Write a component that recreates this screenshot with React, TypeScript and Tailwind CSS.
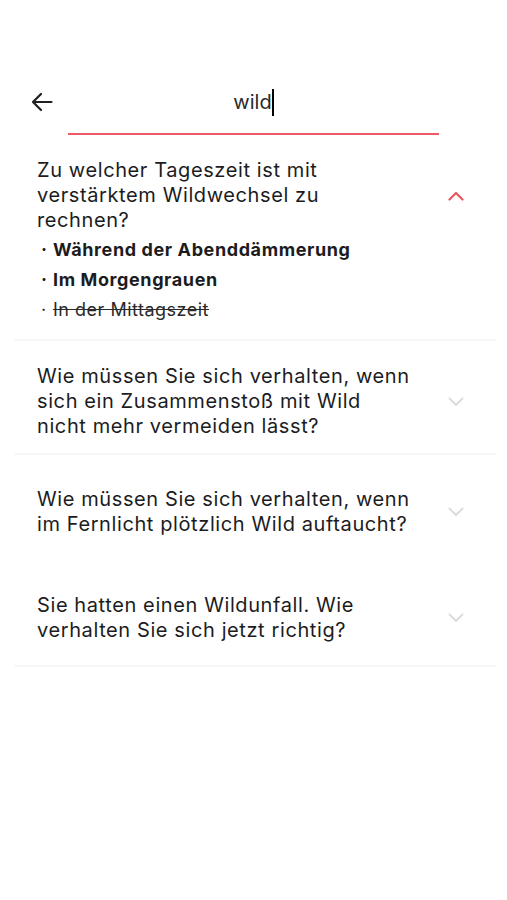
import React from "react";

const font = { fontFamily: "Inter, 'Noto Sans', sans-serif" };

function ChevronUp() {
  return (
    <svg width="16" height="10" viewBox="0 0 16 10" fill="none">
      <path d="M1.5 8.5 L8 2 L14.5 8.5" stroke="#ea5560" strokeWidth="2.2" strokeLinecap="round" strokeLinejoin="round" />
    </svg>
  );
}

function ChevronDown() {
  return (
    <svg width="16" height="10" viewBox="0 0 16 10" fill="none">
      <path d="M1.5 1.5 L8 8 L14.5 1.5" stroke="#dcdcdc" strokeWidth="2" strokeLinecap="round" strokeLinejoin="round" />
    </svg>
  );
}

function Divider() {
  return <div className="ml-[14px] mr-[11px] h-[2px] bg-[#f7f7f7]" />;
}

const q = "text-[20px] leading-[25px] tracking-[0.6px] text-[#1c1c1e]";

export default function App() {
  return (
    <div className="min-h-[900px] w-[507px] bg-white text-[#1c1c1e]" style={font}>
      {/* Header */}
      <div className="flex items-start pt-[78px] pl-[31px]">
        <div className="mt-[13px] w-[22px] h-[22px]">
          <svg width="22" height="22" viewBox="0 0 22 22" fill="none">
            <path d="M20.5 11 H2.5 M10 3 L2 11 L10 19" stroke="#1f1f1f" strokeWidth="2.2" strokeLinecap="round" strokeLinejoin="round" />
          </svg>
        </div>
        <div className="ml-[15px] w-[371px] h-[57px] border-b-2 border-[#ec5b64] flex justify-center pt-[10px]">
          <div className="flex items-start">
            <span className="text-[20px] leading-[28px] text-[#2a2a2a]">wild</span>
            <span className="inline-block w-[2px] h-[27px] mt-[1px] bg-black" />
          </div>
        </div>
      </div>

      {/* List */}
      <div className="mt-[23px]">
        {/* Section 1 */}
        <div className="pl-[14px] pr-[11px]">
          <div className="flex items-center pl-[23px] pr-[32px]">
            <div className="flex-1">
              <div className={q}>
                Zu welcher Tageszeit ist mit
                <br />
                verstärktem Wildwechsel zu
                <br />
                rechnen?
              </div>
            </div>
            <ChevronUp />
          </div>
          <div className="pl-[23px] pt-[2px] pb-[14px] leading-[30px]">
            <div className="flex text-[18px] tracking-[0.6px]">
              <span className="w-[16px] pl-[4px] font-bold">·</span>
              <span className="font-bold">Während der Abenddämmerung</span>
            </div>
            <div className="flex text-[18px] tracking-[0.6px]">
              <span className="w-[16px] pl-[4px] font-bold">·</span>
              <span className="font-bold">Im Morgengrauen</span>
            </div>
            <div className="flex text-[18px] tracking-[0.5px] text-[#2a2a2a]">
              <span className="w-[16px] pl-[4px]">·</span>
              <span className="line-through">In der Mittagszeit</span>
            </div>
          </div>
        </div>
        <Divider />

        {/* Section 2 */}
        <div className="pl-[14px] pr-[11px] pt-[23px] pb-[14px]">
          <div className="flex items-center pl-[23px] pr-[32px]">
            <div className="flex-1">
              <div className={q}>
                Wie müssen Sie sich verhalten, wenn
                <br />
                sich ein Zusammenstoß mit Wild
                <br />
                nicht mehr vermeiden lässt?
              </div>
            </div>
            <ChevronDown />
          </div>
        </div>
        <Divider />

        {/* Section 3 */}
        <div className="pl-[14px] pr-[11px] pt-[32px] pb-[28px]">
          <div className="flex items-center pl-[23px] pr-[32px]">
            <div className="flex-1">
              <div className={q}>
                Wie müssen Sie sich verhalten, wenn
                <br />
                im Fernlicht plötzlich Wild auftaucht?
              </div>
            </div>
            <ChevronDown />
          </div>
        </div>

        {/* Section 4 */}
        <div className="pl-[14px] pr-[11px] pt-[28px] pb-[22px]">
          <div className="flex items-center pl-[23px] pr-[32px]">
            <div className="flex-1">
              <div className={q}>
                Sie hatten einen Wildunfall. Wie
                <br />
                verhalten Sie sich jetzt richtig?
              </div>
            </div>
            <ChevronDown />
          </div>
        </div>
        <Divider />
      </div>
    </div>
  );
}
